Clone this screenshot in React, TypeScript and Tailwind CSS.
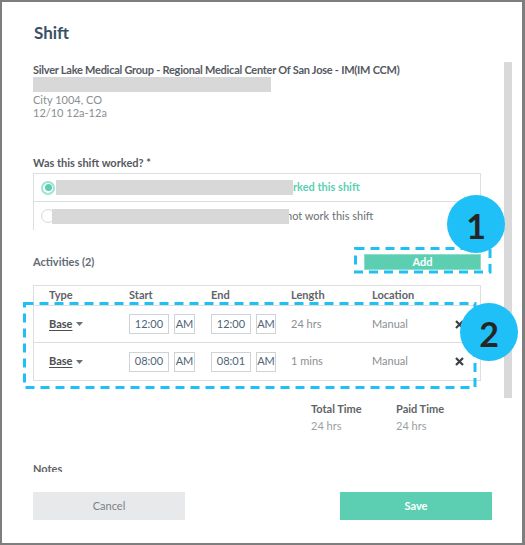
const rows = [
  { start: '12:00', end: '12:00', length: '24 hrs' },
  { start: '08:00', end: '08:01', length: '1 mins' },
];

function TimeBox({ value, wide }: { value: string; wide: number }) {
  return (
    <div
      className="h-[20px] border border-[#cfd3d6] flex items-center justify-center text-[11px] text-[#4e6577]"
      style={{ width: wide }}
    >
      {value}
    </div>
  );
}

export default function App() {
  return (
    <div className="w-[525px] h-[545px] bg-[#7e7e7e] pl-[2px] pt-[2px] pr-[3px] pb-[2px] font-['Lato',sans-serif]">
      <div className="relative h-full bg-white flex flex-col overflow-hidden">
        <div className="h-[60px] pl-[32px] pt-[19px] text-[17px] leading-[24px] font-bold text-[#3a5165]">Shift</div>

        <div className="h-[410px] flex overflow-hidden">
          <div className="w-[448px] ml-[31px] shrink-0 text-[11px]">
            <div className="mt-[1px] leading-[14px] font-bold text-[#555a5f] tracking-[-0.25px] whitespace-nowrap">
              Silver Lake Medical Group - Regional Medical Center Of San Jose - IM(IM CCM)
            </div>
            <div className="h-[15px] w-[238px] bg-[#d8d8d8]" />
            <div className="mt-[1px] leading-[13px] text-[#8a8f93]">City 1004, CO</div>
            <div className="leading-[13px] text-[#8a8f93]">12/10 12a-12a</div>

            <div className="mt-[37px] leading-[14px] font-bold text-[#555a5f]">Was this shift worked? *</div>

            <div className="mt-[3px] h-[57px] border-x border-t border-[#dcdfe1]">
              <div className="h-[28px] border-b border-[#dcdfe1] flex items-center pl-[7px]">
                <div className="w-[14px] h-[14px] rounded-full border-2 border-[#9fe3d1] flex items-center justify-center shrink-0">
                  <div className="w-[7px] h-[7px] rounded-full bg-[#5ccfb3]" />
                </div>
                <div className="h-[15px] w-[237px] ml-[1px] bg-[#d8d8d8] shrink-0" />
                <span className="font-bold text-[#5ccfb3] whitespace-nowrap">rked this shift</span>
              </div>
              <div className="h-[28px] flex items-center pl-[7px]">
                <div className="w-[14px] h-[14px] rounded-full border border-[#d6d9db] shrink-0" />
                <div className="relative z-10 h-[15px] w-[237px] ml-[-3px] bg-[#d8d8d8] shrink-0" />
                <span className="ml-[-3px] text-[#6a6f73] whitespace-nowrap">not work this shift</span>
              </div>
            </div>

            <div className="mt-[24px] h-[16px] flex items-center">
              <span className="font-bold text-[#5f6b75]">Activities (2)</span>
              <div className="ml-auto w-[117px] h-[16px] bg-[#5ccfb3] border border-[#8fdcc8] flex items-center justify-center text-white font-bold">
                Add
              </div>
            </div>

            <div className="mt-[15px] border border-[#dcdfe1]">
              <div className="h-[20px] border-b border-[#dcdfe1] flex items-center pl-[15px] font-bold text-[#5f6468]">
                <span className="w-[80px]">Type</span>
                <span className="w-[82px]">Start</span>
                <span className="w-[80px]">End</span>
                <span className="w-[81px]">Length</span>
                <span>Location</span>
              </div>
              {rows.map((r, i) => (
                <div
                  key={i}
                  className={`h-[37px] flex items-center pl-[15px] ${i === 0 ? 'border-b border-[#dcdfe1]' : ''}`}
                >
                  <div className="w-[80px] flex items-center">
                    <span className="font-bold text-[#4a4f54] underline underline-offset-2">Base</span>
                    <svg width="7" height="4" viewBox="0 0 7 4" className="ml-[4px]">
                      <path d="M0 0 L7 0 L3.5 4 Z" fill="#6b7075" />
                    </svg>
                  </div>
                  <div className="w-[82px] flex items-center gap-[5px]">
                    <TimeBox value={r.start} wide={40} />
                    <TimeBox value="AM" wide={21} />
                  </div>
                  <div className="w-[80px] flex items-center gap-[5px]">
                    <TimeBox value={r.end} wide={40} />
                    <TimeBox value="AM" wide={20} />
                  </div>
                  <span className="w-[81px] text-[#8a8f93]">{r.length}</span>
                  <span className="w-[83px] text-[#8a8f93]">Manual</span>
                  <svg width="9" height="9" viewBox="0 0 9 9">
                    <path d="M1 1 L8 8 M8 1 L1 8" stroke="#3b4046" strokeWidth="2.2" />
                  </svg>
                </div>
              ))}
            </div>

            <div className="mt-[21px] flex pl-[278px]">
              <div className="w-[85px]">
                <div className="leading-[14px] font-bold text-[#5f6468]">Total Time</div>
                <div className="mt-[3px] leading-[14px] text-[#9a9fa3]">24 hrs</div>
              </div>
              <div>
                <div className="leading-[14px] font-bold text-[#5f6468]">Paid Time</div>
                <div className="mt-[3px] leading-[14px] text-[#9a9fa3]">24 hrs</div>
              </div>
            </div>

            <div className="mt-[29px] leading-[14px] font-bold text-[#5f6468]">Notes</div>
          </div>
          <div className="ml-[23px] w-[8px] h-[336px] bg-[#d9d9d9] shrink-0" />
        </div>

        <div className="mt-[20px] flex pl-[31px] text-[11px]">
          <div className="w-[152px] h-[28px] bg-[#e8e9eb] flex items-center justify-center text-[#7b8085]">Cancel</div>
          <div className="ml-[155px] w-[152px] h-[28px] bg-[#5ccfb3] flex items-center justify-center text-white font-bold">
            Save
          </div>
        </div>

        <svg className="absolute inset-0 pointer-events-none" width="520" height="541">
          <rect x="353.5" y="246.5" width="134.5" height="23.5" fill="none" stroke="#1ec0f5" strokeWidth="3" strokeDasharray="9 6" />
          <rect x="22.5" y="301.5" width="450.5" height="84" fill="none" stroke="#1ec0f5" strokeWidth="3" strokeDasharray="9 6" />
        </svg>

        <div className="absolute left-[445px] top-[193px] w-[58px] h-[58px] rounded-full bg-[#1ec0f7] flex items-center justify-center text-[34px] font-bold text-[#252525] leading-none pt-[3px]">
          1
        </div>
        <div className="absolute left-[458px] top-[301px] w-[58px] h-[58px] rounded-full bg-[#1ec0f7] flex items-center justify-center text-[34px] font-bold text-[#252525] leading-none pt-[3px]">
          2
        </div>
      </div>
    </div>
  );
}
